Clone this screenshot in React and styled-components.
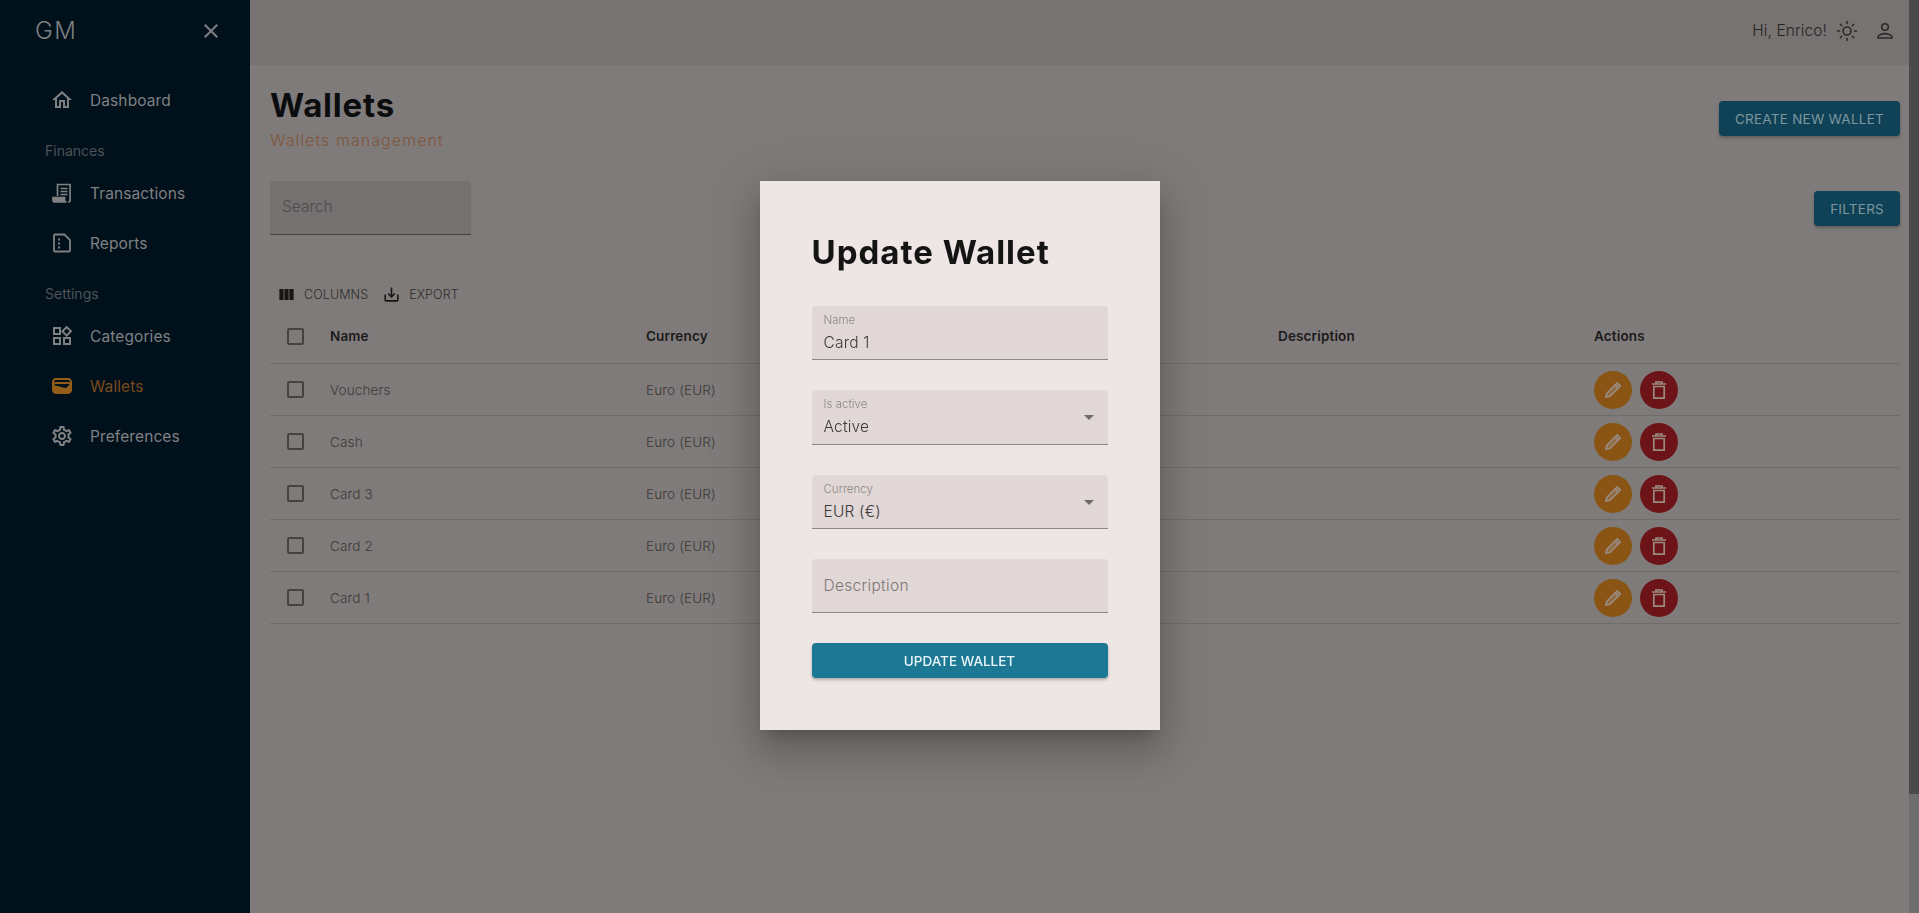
import React from 'react';
import styled, { createGlobalStyle } from 'styled-components';
import {
  MdClose,
  MdOutlineHome,
  MdOutlineWidgets,
  MdWallet,
  MdOutlineSettings,
  MdViewColumn,
  MdSaveAlt,
  MdArrowDropDown,
} from 'react-icons/md';

const FONT = '"Inter", "Open Sans", "Liberation Sans", sans-serif';

const GlobalStyle = createGlobalStyle`
  html, body {
    margin: 0;
    height: 100%;
    overflow: hidden;
  }
  body {
    font-family: ${FONT};
    background: #7f7b7a;
  }
  * {
    box-sizing: border-box;
  }
`;

const Shell = styled.div`
  display: flex;
  height: 100vh;
  position: relative;
`;

const Sidebar = styled.aside`
  width: 250px;
  flex-shrink: 0;
  background: #01111c;
  color: #7f8082;
`;

const SidebarHead = styled.div`
  height: 65px;
  display: flex;
  align-items: center;
  justify-content: space-between;
  padding: 0 27px 4px 35px;
  font-size: 24px;
  font-weight: 300;
  color: #7d7f82;
  letter-spacing: 1.5px;
  svg {
    font-size: 24px;
  }
`;

const NavGroup = styled.div`
  padding-top: 10px;
`;

const NavItem = styled.div`
  height: 50px;
  display: flex;
  align-items: center;
  gap: 16px;
  padding-left: 50px;
  font-size: 15.5px;
  letter-spacing: 0.1px;
  color: ${(props) => (props.$active ? '#7a4a1a' : '#7f8082')};
  svg {
    width: 24px;
    height: 24px;
    flex-shrink: 0;
    color: ${(props) => (props.$active ? '#935c18' : '#7f8082')};
  }
`;

const SectionLabel = styled.div`
  height: 43px;
  padding: 16px 0 0 45px;
  font-size: 14px;
  line-height: 20px;
  color: #4e5256;
`;

const Main = styled.main`
  flex: 1;
  min-width: 0;
  display: flex;
  flex-direction: column;
`;

const Topbar = styled.header`
  height: 65px;
  flex-shrink: 0;
  background: #777372;
  display: flex;
  align-items: center;
  justify-content: flex-end;
  gap: 8px;
  padding: 0 12px 4px 0;
  color: #252322;
  font-size: 15.5px;
  font-weight: 300;
  letter-spacing: 0.1px;
`;

const TopIcon = styled.svg`
  width: 24px;
  height: 24px;
  margin-left: ${(props) => props.$gap || 0}px;
  color: #2d2b2a;
  fill: none;
  stroke: currentColor;
  stroke-width: 1.6;
  stroke-linecap: round;
`;

const Content = styled.div`
  flex: 1;
  padding: 16px 9px 0 20px;
  background: #7f7b7a;
`;

const TitleRow = styled.div`
  display: flex;
  justify-content: space-between;
  align-items: flex-start;
  height: 100px;
`;

const Title = styled.h1`
  margin: 0;
  font-size: 33px;
  line-height: 48px;
  font-weight: 700;
  letter-spacing: 0.8px;
  color: #0b0c0e;
`;

const Subtitle = styled.div`
  font-size: 16px;
  line-height: 22px;
  font-weight: 300;
  letter-spacing: 1.05px;
  color: #80563a;
`;

const DarkButton = styled.button`
  height: 35px;
  margin-top: ${(props) => props.$top}px;
  padding: 0 16px;
  border: 0;
  border-radius: 4px;
  background: #0f4256;
  color: #7d969f;
  font-family: ${FONT};
  font-size: 13.5px;
  letter-spacing: 0.25px;
  box-shadow: 0 2px 3px rgba(0, 0, 0, 0.25);
`;

const FilterRow = styled.div`
  display: flex;
  justify-content: space-between;
  align-items: flex-start;
  height: 101px;
`;

const SearchBox = styled.div`
  width: 201px;
  height: 54px;
  padding: 0 0 2px 12px;
  display: flex;
  align-items: center;
  background: #757171;
  border-bottom: 1px solid #444140;
  border-radius: 4px 4px 0 0;
  font-size: 15.5px;
  font-weight: 300;
  color: #4e4b4a;
`;

const Toolbar = styled.div`
  display: flex;
  align-items: center;
  gap: 14px;
  height: 24px;
  padding-left: 7px;
  margin-bottom: 5px;
`;

const ToolButton = styled.span`
  display: flex;
  align-items: center;
  gap: 8px;
  font-size: 12.5px;
  font-weight: 300;
  letter-spacing: 0.1px;
  color: #2f2d2c;
  svg {
    font-size: 19px;
    color: #171615;
  }
`;

const TableRow = styled.div`
  display: grid;
  grid-template-columns: 50px repeat(5, 316px);
  align-items: center;
  height: ${(props) => (props.$head ? '53px' : '52px')};
  padding-bottom: ${(props) => (props.$head ? '2px' : '0')};
  border-bottom: 1px solid #6f6c6b;
  font-size: 13.5px;
  letter-spacing: 0.15px;
  font-weight: ${(props) => (props.$head ? 600 : 300)};
  color: ${(props) => (props.$head ? '#1b1a1a' : '#3c3a39')};
`;

const CheckCell = styled.div`
  display: flex;
  justify-content: center;
`;

const Check = styled.span`
  width: 17px;
  height: 17px;
  border: 2px solid #454241;
  border-radius: 2px;
`;

const Cell = styled.div`
  padding-left: 10px;
`;

const ActionCell = styled.div`
  padding-left: 10px;
  display: flex;
  gap: 8px;
`;

const RoundButton = styled.span`
  width: 38px;
  height: 38px;
  border-radius: 50%;
  display: flex;
  align-items: center;
  justify-content: center;
  background: ${(props) => props.$color};
  color: #9a8a80;
  svg {
    width: 24px;
    height: 24px;
    fill: none;
    stroke: currentColor;
    stroke-width: 1.7;
  }
`;

const ScrollTrack = styled.div`
  width: 10px;
  flex-shrink: 0;
  display: flex;
  flex-direction: column;
`;

const ScrollUpper = styled.div`
  height: 794px;
  background: #4a4a4a;
`;

const ScrollLower = styled.div`
  flex: 1;
  background: #6e6e6e;
`;

const Backdrop = styled.div`
  position: fixed;
  inset: 0;
  display: flex;
  align-items: flex-start;
  justify-content: center;
  padding-top: 181px;
`;

const Modal = styled.div`
  width: 400px;
  height: 549px;
  padding: 51px 52px 0;
  background: #eee6e4;
  box-shadow: 0 11px 15px -7px rgba(0, 0, 0, 0.2), 0 24px 38px 3px rgba(0, 0, 0, 0.14),
    0 9px 46px 8px rgba(0, 0, 0, 0.12);
  display: flex;
  flex-direction: column;
`;

const ModalTitle = styled.h2`
  margin: 0 0 34px;
  font-size: 33px;
  line-height: 40px;
  font-weight: 700;
  letter-spacing: 1px;
  color: #141414;
`;

const Fields = styled.div`
  display: flex;
  flex-direction: column;
  gap: 30px;
`;

const Field = styled.div`
  position: relative;
  height: ${(props) => (props.$tall ? '55px' : '54px')};
  padding: 6px 12px 0;
  background: #e1d7d6;
  border-bottom: 1px solid #8f8887;
  border-radius: 4px 4px 0 0;
`;

const FieldLabel = styled.div`
  font-size: 11.5px;
  line-height: 16px;
  font-weight: 300;
  color: #8d8786;
`;

const FieldValue = styled.div`
  margin-top: 3px;
  font-size: 15.5px;
  line-height: 24px;
  font-weight: 300;
  letter-spacing: 0.2px;
  color: #3b3938;
`;

const Placeholder = styled.div`
  font-size: 15.5px;
  line-height: 42px;
  font-weight: 300;
  letter-spacing: 0.3px;
  color: #7c7675;
`;

const Caret = styled(MdArrowDropDown)`
  position: absolute;
  right: 7px;
  top: 15px;
  font-size: 24px;
  color: #716b6a;
`;

const SubmitButton = styled.button`
  width: 100%;
  height: 35px;
  margin-top: 30px;
  border: 0;
  border-radius: 4px;
  background: #1d7894;
  color: #e8f6fa;
  font-family: ${FONT};
  font-size: 13.5px;
  font-weight: 500;
  box-shadow: 0 2px 3px rgba(0, 0, 0, 0.25);
`;

const ReceiptIcon = () => (
  <svg viewBox="0 0 24 24" fill="none" stroke="currentColor" strokeWidth="1.7">
    <path d="M7.5 15V3.5h12.6V19a2 2 0 0 1-2 2" />
    <path d="M10.5 7.5h7M10.5 10.5h7M10.5 13.5h7" strokeWidth="1.5" />
    <path d="M3 16.5h11.5V19a2 2 0 0 0 2 2H5a2 2 0 0 1-2-2z" fill="currentColor" />
  </svg>
);

const ReportIcon = () => (
  <svg viewBox="0 0 24 24" fill="none" stroke="currentColor" strokeWidth="1.8">
    <path d="M4 4.5a1 1 0 0 1 1-1h9.5L20 9v10.5a1 1 0 0 1-1 1H5a1 1 0 0 1-1-1z" />
    <path d="M8 7.5h2v2H8zM8 11.5h2v2H8zM8 15.5h2v2H8z" fill="currentColor" stroke="none" />
  </svg>
);

const PencilIcon = () => (
  <svg viewBox="0 0 24 24">
    <path d="M5 19.2l1-4L16.2 5l3 3L9 18.2z" fill="currentColor" fillOpacity="0.4" />
    <path d="M14.3 7l3 3" />
  </svg>
);

const TrashIcon = () => (
  <svg viewBox="0 0 24 24">
    <path d="M5 6h14M9 6V4h6v2" />
    <path d="M6.8 8.5h10.4V20.2H6.8z" />
  </svg>
);

const wallets = ['Vouchers', 'Cash', 'Card 3', 'Card 2', 'Card 1'];

export default function App() {
  return (
    <>
      <GlobalStyle />
      <Shell>
        <Sidebar>
          <SidebarHead>
            GM
            <MdClose />
          </SidebarHead>
          <NavGroup>
            <NavItem><MdOutlineHome />Dashboard</NavItem>
            <SectionLabel>Finances</SectionLabel>
            <NavItem><ReceiptIcon />Transactions</NavItem>
            <NavItem><ReportIcon />Reports</NavItem>
            <SectionLabel>Settings</SectionLabel>
            <NavItem><MdOutlineWidgets />Categories</NavItem>
            <NavItem $active><MdWallet />Wallets</NavItem>
            <NavItem><MdOutlineSettings />Preferences</NavItem>
          </NavGroup>
        </Sidebar>
        <Main>
          <Topbar>
            Hi, Enrico!
            <TopIcon viewBox="0 0 24 24">
              <circle cx="12" cy="12" r="4" />
              <path d="M12 2.5v2M12 19.5v2M2.5 12h2M19.5 12h2M5.3 5.3l1.4 1.4M17.3 17.3l1.4 1.4M5.3 18.7l1.4-1.4M17.3 6.7l1.4-1.4" />
            </TopIcon>
            <TopIcon $gap={6} viewBox="0 0 24 24">
              <circle cx="12" cy="8" r="3.3" />
              <path d="M5 19v-1c0-2.4 4.5-3.4 7-3.4s7 1 7 3.4v1z" />
            </TopIcon>
          </Topbar>
          <Content>
            <TitleRow>
              <div>
                <Title>Wallets</Title>
                <Subtitle>Wallets management</Subtitle>
              </div>
              <DarkButton $top={20}>CREATE NEW WALLET</DarkButton>
            </TitleRow>
            <FilterRow>
              <SearchBox>Search</SearchBox>
              <DarkButton $top={10}>FILTERS</DarkButton>
            </FilterRow>
            <Toolbar>
              <ToolButton><MdViewColumn />COLUMNS</ToolButton>
              <ToolButton><MdSaveAlt />EXPORT</ToolButton>
            </Toolbar>
            <TableRow $head>
              <CheckCell><Check /></CheckCell>
              <Cell>Name</Cell>
              <Cell>Currency</Cell>
              <Cell />
              <Cell>Description</Cell>
              <Cell>Actions</Cell>
            </TableRow>
            {wallets.map((name) => (
              <TableRow key={name}>
                <CheckCell><Check /></CheckCell>
                <Cell>{name}</Cell>
                <Cell>Euro (EUR)</Cell>
                <Cell />
                <Cell />
                <ActionCell>
                  <RoundButton $color="#8a5414"><PencilIcon /></RoundButton>
                  <RoundButton $color="#6c1417"><TrashIcon /></RoundButton>
                </ActionCell>
              </TableRow>
            ))}
          </Content>
        </Main>
        <ScrollTrack>
          <ScrollUpper />
          <ScrollLower />
        </ScrollTrack>
        <Backdrop>
          <Modal>
            <ModalTitle>Update Wallet</ModalTitle>
            <Fields>
              <Field>
                <FieldLabel>Name</FieldLabel>
                <FieldValue>Card 1</FieldValue>
              </Field>
              <Field $tall>
                <FieldLabel>Is active</FieldLabel>
                <FieldValue>Active</FieldValue>
                <Caret />
              </Field>
              <Field>
                <FieldLabel>Currency</FieldLabel>
                <FieldValue>EUR (€)</FieldValue>
                <Caret />
              </Field>
              <Field>
                <Placeholder>Description</Placeholder>
              </Field>
            </Fields>
            <SubmitButton>UPDATE WALLET</SubmitButton>
          </Modal>
        </Backdrop>
      </Shell>
    </>
  );
}
